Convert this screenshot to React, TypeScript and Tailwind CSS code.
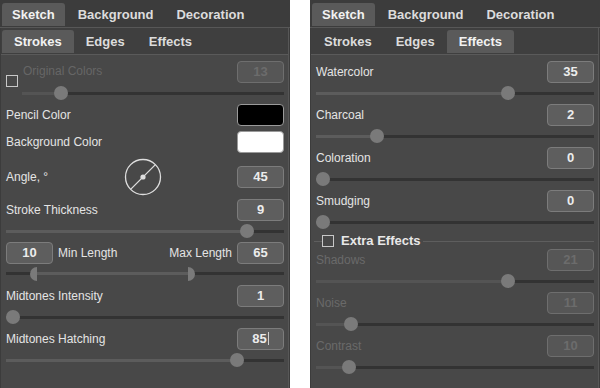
import React from "react"

type Setting = { label: string; value: number; thumb: number; disabled?: boolean }

const leftTop = ["Sketch", "Background", "Decoration"]
const subTabs = ["Strokes", "Edges", "Effects"]

function TabBar({ items, active, sub }: { items: string[]; active: number; sub?: boolean }) {
  return (
    <div
      className={
        sub
          ? "flex px-[1px] pt-[2px] pb-[1px] border-b border-[#5a5a5a] bg-[#3f3f3f]"
          : "flex gap-[3px] px-[2px] pt-[3px] pb-[1px] border-b border-[#575757] bg-[#3c3c3c]"
      }
    >
      {items.map((t, i) => (
        <div
          key={t}
          className={
            "h-[23px] flex items-center text-[13px] font-bold rounded-t-[3px] " +
            (sub ? "px-[12px] " : "px-[10px] ") +
            (i === active ? "bg-[#5a5a5a] text-[#f2f2f2]" : "text-[#dcdcdc]")
          }
        >
          {t}
        </div>
      ))}
    </div>
  )
}

function ValueBox({ value, disabled, cursor }: { value: React.ReactNode; disabled?: boolean; cursor?: boolean }) {
  return (
    <div
      className={
        "w-[47px] h-[22px] rounded-[4px] border flex items-center justify-center text-[13px] font-bold " +
        (disabled
          ? "bg-[#565656] border-[#6e6e6e] text-[#6c6c6c]"
          : "bg-[#5e5e5e] border-[#7c7c7c] text-[#ececec]")
      }
    >
      {value}
      {cursor && <span className="w-[1px] h-[13px] bg-[#cfcfcf] ml-[1px]" />}
    </div>
  )
}

function Swatch({ color }: { color: string }) {
  return <div className={"w-[47px] h-[22px] rounded-[4px] border border-[#9a9a9a] " + color} />
}

// thumb = thumb centre measured from the panel's left edge
function Slider({ thumb, start = 6, disabled }: { thumb: number; start?: number; disabled?: boolean }) {
  const fill = thumb - start
  return (
    <div className="h-[22px] flex items-center" style={{ paddingLeft: start - 6 }}>
      <div className="relative h-[3px] w-full bg-[#333333]">
        <div
          className={"absolute left-0 top-0 h-full " + (disabled ? "bg-[#545454]" : "bg-[#5c5c5c]")}
          style={{ width: fill }}
        />
        <div
          className="absolute top-1/2 -translate-y-1/2 w-[14px] h-[14px] rounded-full bg-[#7a7a7a]"
          style={{ left: fill - 7 }}
        />
      </div>
    </div>
  )
}

function RangeSlider({ from, to }: { from: number; to: number }) {
  return (
    <div className="h-[21px] flex items-center">
      <div className="relative h-[3px] w-full bg-[#333333]">
        <div className="absolute top-0 h-full bg-[#5c5c5c]" style={{ left: from - 6, width: to - from }} />
        <div
          className="absolute top-1/2 -translate-y-1/2 w-[7px] h-[14px] rounded-l-full bg-[#7a7a7a]"
          style={{ left: from - 13 }}
        />
        <div
          className="absolute top-1/2 -translate-y-1/2 w-[7px] h-[14px] rounded-r-full bg-[#7a7a7a]"
          style={{ left: to - 6 }}
        />
      </div>
    </div>
  )
}

function Checkbox() {
  return <div className="w-[12px] h-[12px] border border-[#c8c8c8] shrink-0" />
}

function SettingRow({ s, cursor }: { s: Setting; cursor?: boolean }) {
  return (
    <div>
      <div className="h-[21px] flex items-center justify-between">
        <span className={s.disabled ? "text-[#6a6a6a]" : "text-[#e4e4e4]"}>{s.label}</span>
        <ValueBox value={s.value} disabled={s.disabled} cursor={cursor} />
      </div>
      <Slider thumb={s.thumb} disabled={s.disabled} />
    </div>
  )
}

function Panel({ activeSub, children }: { activeSub: number; children: React.ReactNode }) {
  return (
    <div className="w-[290px] h-[388px] bg-[#3c3c3c] flex flex-col">
      <TabBar items={leftTop} active={0} />
      <div className="flex-1 flex flex-col ml-[1px] mr-[1px] border-r border-[#575757] bg-[#484848]">
        <TabBar items={subTabs} active={activeSub} sub />
        <div className="flex-1 pl-[5px] pr-[4px] pt-[6px]">{children}</div>
      </div>
    </div>
  )
}

function AngleDial() {
  return (
    <svg width="38" height="38" viewBox="0 0 38 38">
      <circle cx="19" cy="19" r="17.5" fill="none" stroke="#dedede" strokeWidth="1.3" />
      <line x1="6.6" y1="31.4" x2="31.4" y2="6.6" stroke="#dedede" strokeWidth="1.3" />
      <circle cx="19" cy="19" r="2.6" fill="#dedede" />
    </svg>
  )
}

const effects: Setting[] = [
  { label: "Watercolor", value: 35, thumb: 198 },
  { label: "Charcoal", value: 2, thumb: 67 },
  { label: "Coloration", value: 0, thumb: 13 },
  { label: "Smudging", value: 0, thumb: 13 },
]

const extra: Setting[] = [
  { label: "Shadows", value: 21, thumb: 198, disabled: true },
  { label: "Noise", value: 11, thumb: 41, disabled: true },
  { label: "Contrast", value: 10, thumb: 39, disabled: true },
]

export default function App() {
  return (
    <div className="w-[600px] h-[388px] bg-white flex justify-between overflow-hidden font-['Liberation_Sans',Arial,sans-serif] text-[12px]">
      {/* Strokes tab */}
      <Panel activeSub={0}>
        <div>
          <div className="h-[21px] flex items-start justify-between">
            <div className="flex items-start">
              <div className="mt-[14px]">
                <Checkbox />
              </div>
              <span className="ml-[5px] leading-[21px] text-[#666666]">Original Colors</span>
            </div>
            <ValueBox value={13} disabled />
          </div>
          <Slider thumb={61} start={22} disabled />
        </div>

        <div className="h-[21px] flex items-center justify-between">
          <span className="text-[#e4e4e4]">Pencil Color</span>
          <Swatch color="bg-black" />
        </div>
        <div className="h-[21px] mt-[6px] flex items-center justify-between">
          <span className="text-[#e4e4e4]">Background Color</span>
          <Swatch color="bg-white" />
        </div>

        <div className="h-[35px] mt-[7px] flex items-center">
          <span className="w-[118px] text-[#e4e4e4]">Angle, °</span>
          <AngleDial />
          <div className="flex-1 flex justify-end">
            <ValueBox value={45} />
          </div>
        </div>

        <div className="mt-[5px]">
          <SettingRow s={{ label: "Stroke Thickness", value: 9, thumb: 247 }} />
        </div>

        <div className="h-[21px] flex items-center">
          <ValueBox value={10} />
          <span className="ml-[5px] text-[#e4e4e4]">Min Length</span>
          <span className="ml-auto mr-[5px] text-[#e4e4e4]">Max Length</span>
          <ValueBox value={65} />
        </div>
        <RangeSlider from={37} to={188} />

        <div className="mt-[1px]">
          <SettingRow s={{ label: "Midtones Intensity", value: 1, thumb: 13 }} />
        </div>
        <SettingRow s={{ label: "Midtones Hatching", value: 85, thumb: 237 }} cursor />
      </Panel>

      {/* Effects tab */}
      <Panel activeSub={2}>
        {effects.map((s) => (
          <SettingRow key={s.label} s={s} />
        ))}

        <div className="h-[16px] flex items-center">
          <div className="w-[8px] h-px bg-[#5e5e5e] -ml-[2px]" />
          <Checkbox />
          <span className="ml-[7px] mr-[3px] text-[13px] font-bold text-[#e8e8e8]">Extra Effects</span>
          <div className="flex-1 h-px bg-[#5e5e5e]" />
        </div>

        {extra.map((s) => (
          <SettingRow key={s.label} s={s} />
        ))}
      </Panel>
    </div>
  )
}
